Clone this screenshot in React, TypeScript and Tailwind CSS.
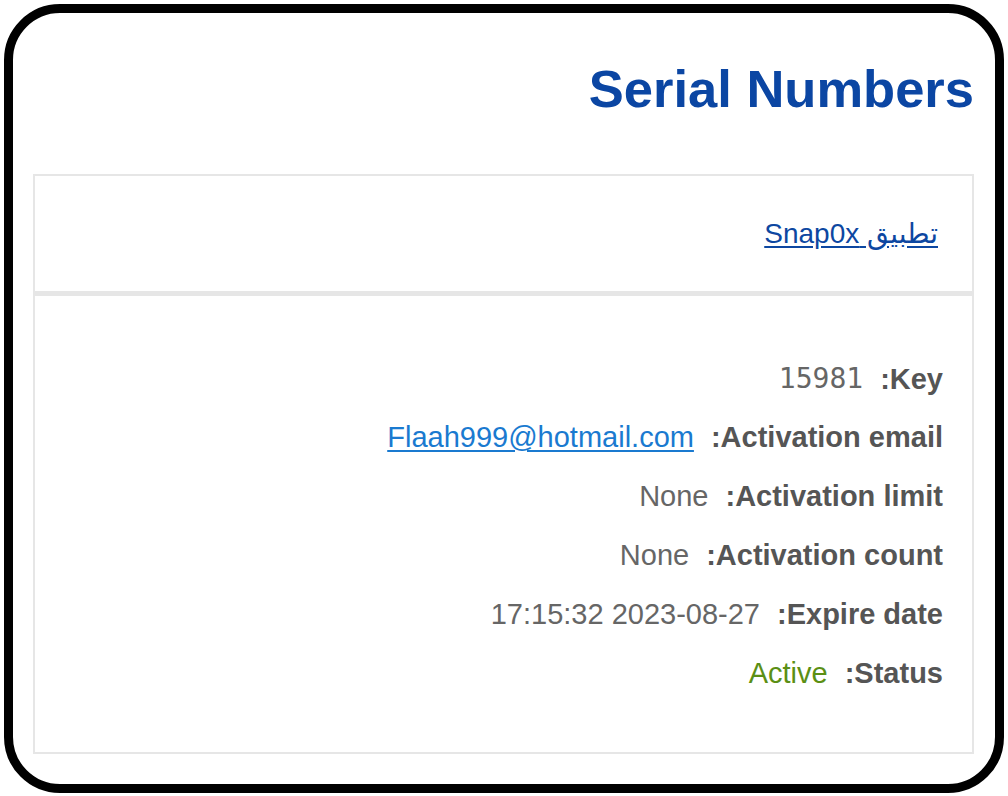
const rows: { label: string; value: string; kind?: 'mono' | 'link' | 'ok' }[] = [
  { label: 'Key:', value: '15981', kind: 'mono' },
  { label: 'Activation email:', value: 'Flaah999@hotmail.com', kind: 'link' },
  { label: 'Activation limit:', value: 'None' },
  { label: 'Activation count:', value: 'None' },
  { label: 'Expire date:', value: '2023-08-27 17:15:32' },
  { label: 'Status:', value: 'Active', kind: 'ok' },
]

function Value({ value, kind }: { value: string; kind?: string }) {
  if (kind === 'mono') {
    return <span className="font-['DejaVu_Sans_Mono',monospace] text-[#666] text-[28px]">{value}</span>
  }
  if (kind === 'link') {
    return <a className="text-[#1a7ad0] underline underline-offset-[3px]">{value}</a>
  }
  if (kind === 'ok') {
    return <span className="text-[#5b8f14]">{value}</span>
  }
  return <span className="text-[#666]">{value}</span>
}

export default function App() {
  return (
    <div className="bg-white w-[1008px] h-[796px] p-[4px] font-['Liberation_Sans','DejaVu_Sans',sans-serif]" dir="rtl">
      <div className="w-[1000px] h-[789px] border-[9px] border-black rounded-[56px] pt-[46px] pl-[20px] pr-[21px]">
        <h1 className="text-[52.5px] leading-[60px] font-bold text-[#0b46a3]">Serial Numbers</h1>

        <div className="mt-[55px] border-2 border-[#e6e6e6]">
          <div className="h-[120px] flex items-center pr-[34px] border-b-[5px] border-[#e6e6e6]">
            <a className="text-[28px] text-[#0d47a1] underline underline-offset-[3px]">تطبيق Snap0x</a>
          </div>
          <div className="pt-[54px] pb-[49px] pr-[29px]">
            {rows.map((r) => (
              <div key={r.label} className="h-[58.8px] flex items-center gap-[17px] text-[29px]">
                <span className="font-bold text-[#555]">{r.label}</span>
                <Value value={r.value} kind={r.kind} />
              </div>
            ))}
          </div>
        </div>
      </div>
    </div>
  )
}
